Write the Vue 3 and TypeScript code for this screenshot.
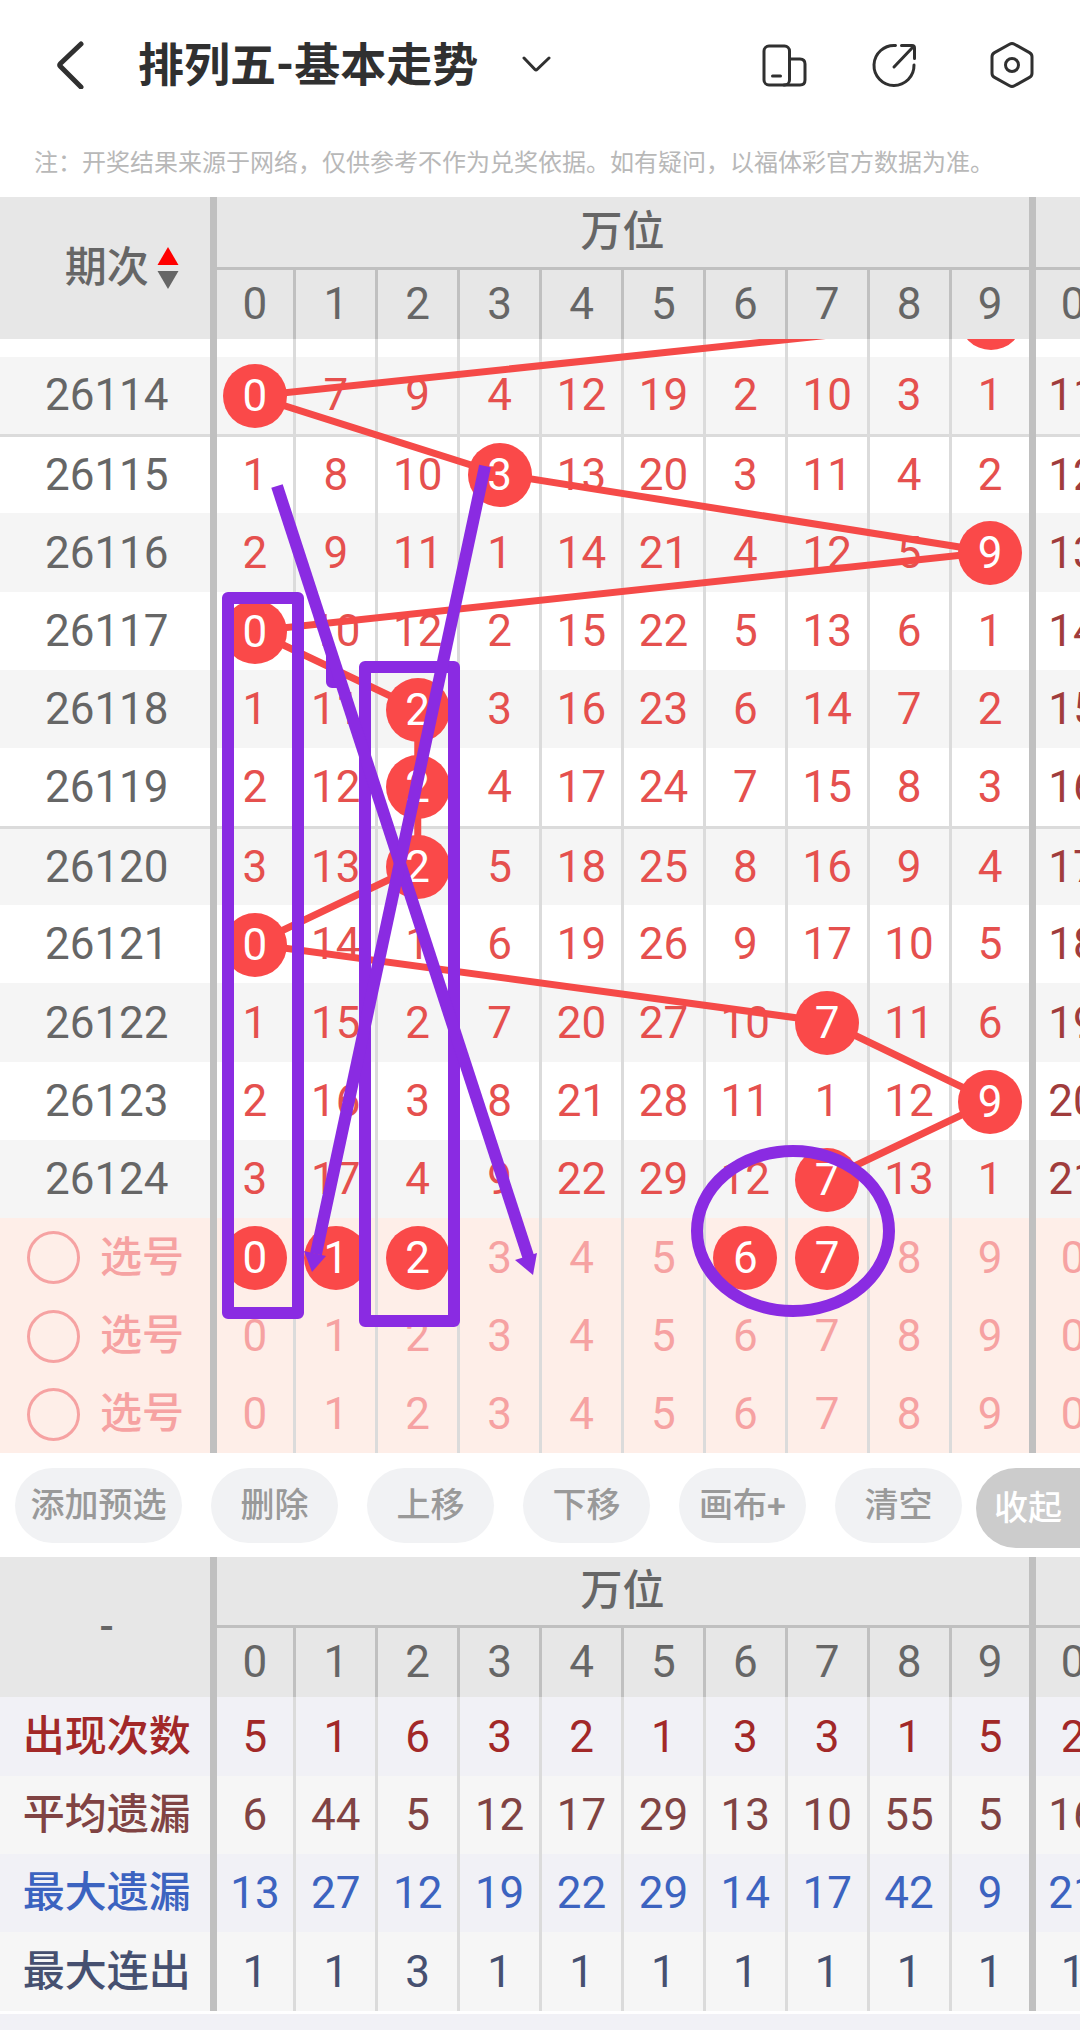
<script setup lang="ts">
import { ref } from 'vue'

interface Draw {
  issue: string
  cells: number[]
  hit: number
  next: number
}

interface Stat {
  label: string
  tone: string
  values: number[]
  next: number
}

const digits = [0, 1, 2, 3, 4, 5, 6, 7, 8, 9]

const draws: Draw[] = [
  { issue: '26114', cells: [0, 7, 9, 4, 12, 19, 2, 10, 3, 1], hit: 0, next: 11 },
  { issue: '26115', cells: [1, 8, 10, 3, 13, 20, 3, 11, 4, 2], hit: 3, next: 12 },
  { issue: '26116', cells: [2, 9, 11, 1, 14, 21, 4, 12, 5, 9], hit: 9, next: 13 },
  { issue: '26117', cells: [0, 10, 12, 2, 15, 22, 5, 13, 6, 1], hit: 0, next: 14 },
  { issue: '26118', cells: [1, 11, 2, 3, 16, 23, 6, 14, 7, 2], hit: 2, next: 15 },
  { issue: '26119', cells: [2, 12, 2, 4, 17, 24, 7, 15, 8, 3], hit: 2, next: 16 },
  { issue: '26120', cells: [3, 13, 2, 5, 18, 25, 8, 16, 9, 4], hit: 2, next: 17 },
  { issue: '26121', cells: [0, 14, 1, 6, 19, 26, 9, 17, 10, 5], hit: 0, next: 18 },
  { issue: '26122', cells: [1, 15, 2, 7, 20, 27, 10, 7, 11, 6], hit: 7, next: 19 },
  { issue: '26123', cells: [2, 16, 3, 8, 21, 28, 11, 1, 12, 9], hit: 9, next: 20 },
  { issue: '26124', cells: [3, 17, 4, 9, 22, 29, 12, 7, 13, 1], hit: 7, next: 21 },
]

const picks = ref<number[][]>([[0, 1, 2, 6, 7], [], []])
const activePick = ref<number | null>(null)

function toggle(row: number, digit: number) {
  const list = picks.value[row]
  const at = list.indexOf(digit)
  if (at < 0) list.push(digit)
  else list.splice(at, 1)
}

const stats: Stat[] = [
  { label: '出现次数', tone: 'count', values: [5, 1, 6, 3, 2, 1, 3, 3, 1, 5], next: 2 },
  { label: '平均遗漏', tone: 'average', values: [6, 44, 5, 12, 17, 29, 13, 10, 55, 5], next: 16 },
  { label: '最大遗漏', tone: 'longest', values: [13, 27, 12, 19, 22, 29, 14, 17, 42, 9], next: 21 },
  { label: '最大连出', tone: 'streak', values: [1, 1, 3, 1, 1, 1, 1, 1, 1, 1], next: 1 },
]

const actions = ['添加预选', '删除', '上移', '下移', '画布+', '清空']

// Trend line geometry: the overlay spans the ten digit columns,
// and every third row is one pixel taller than its neighbours.
const overlayWidth = 819
const overlayHeight = 1114
const columnWidth = overlayWidth / 10
const peek = 18
const rowHeight = 78

const centreX = (digit: number) => (digit + 0.5) * columnWidth
const centreY = (row: number) => peek + row * rowHeight + Math.floor(row / 3) + rowHeight / 2

const previous = { x: centreX(9), y: peek - rowHeight / 2 }
const trend = [
  `${previous.x},${previous.y}`,
  ...draws.map((d, i) => `${centreX(d.hit)},${centreY(i)}`),
].join(' ')
</script>

<template>
  <main class="page">
    <header class="bar">
      <button class="icon back" type="button" aria-label="返回">
        <svg width="28" height="48" viewBox="0 0 28 48"><path d="M25 3 4.500 22.500Q3 24 4.500 25.500L25 46" /></svg>
      </button>
      <h1 class="title">排列五-基本走势</h1>
      <button class="icon more" type="button" aria-label="切换走势">
        <svg width="30" height="18" viewBox="0 0 30 18"><path d="M3 2 14 13.500q1 1 2 0L28 2" /></svg>
      </button>
      <nav class="tools">
        <button class="icon" type="button" aria-label="横竖屏">
          <svg width="48" height="48" viewBox="0 0 48 48">
            <rect x="3" y="5" width="25.500" height="39" rx="5" />
            <path d="M28.500 18H39q5 0 5 5v16q0 5-5 5H23M11.500 35h8" />
          </svg>
        </button>
        <button class="icon" type="button" aria-label="分享">
          <svg width="48" height="48" viewBox="0 0 48 48">
            <path d="M25.500 4.500A20 20 0 1 0 44 24M24 26 43.500 5.500M31.500 4.500H42q2.500 0 2.500 2.500V17.500" />
          </svg>
        </button>
        <button class="icon settings" type="button" aria-label="设置">
          <svg width="48" height="48" viewBox="0 0 48 48">
            <path d="M21.500 3.200q2.500-1.400 5 0l15 8.400q2.500 1.400 2.500 4.200v16.400q0 2.800-2.500 4.200l-15 8.400q-2.500 1.400-5 0l-15-8.400Q4 35 4 32.200V15.800q0-2.800 2.500-4.200Z" />
            <circle cx="24" cy="24" r="6.500" />
          </svg>
        </button>
      </nav>
    </header>
    <p class="note">注：开奖结果来源于网络，仅供参考不作为兑奖依据。如有疑问，以福体彩官方数据为准。</p>

    <section class="chart">
      <table class="grid">
        <colgroup>
          <col class="col-label" />
          <col v-for="d in digits" :key="d" />
          <col class="col-next" />
        </colgroup>
        <thead>
          <tr class="group">
            <th class="label" rowspan="2" scope="col">
              <button class="sort" type="button">
                期次
                <svg width="22" height="44" viewBox="0 0 22 44">
                  <path class="up" d="M11 1 21.500 19H.5Z" />
                  <path class="down" d="M.5 25h21L11 43Z" />
                </svg>
              </button>
            </th>
            <th class="place" colspan="10" scope="colgroup">万位</th>
            <th class="place"></th>
          </tr>
          <tr class="heads">
            <th v-for="d in digits" :key="d" scope="col">{{ d }}</th>
            <th class="next" scope="col"><div>0</div></th>
          </tr>
        </thead>
        <tbody>
          <tr class="peek">
            <th class="label"></th>
            <td v-for="d in digits" :key="d"></td>
            <td class="next"></td>
          </tr>
          <tr v-for="(row, r) in draws" :key="row.issue" class="draw" :class="{ shade: r % 2 === 0, tall: r % 3 === 2, rule: r === 0 || r === 5 }">
            <th class="label" scope="row">{{ row.issue }}</th>
            <td v-for="(n, i) in row.cells" :key="i">
              <span :class="{ ball: i === row.hit }">{{ n }}</span>
            </td>
            <td class="next"><div>{{ row.next }}</div></td>
          </tr>
          <tr v-for="(pick, r) in picks" :key="'pick' + r" class="pick" :class="{ tall: r === 0 }">
            <th class="label" scope="row">
              <label class="choose"><input v-model="activePick" type="radio" name="pick" :value="r" />选号</label>
            </th>
            <td v-for="d in digits" :key="d">
              <button :class="{ ball: pick.includes(d) }" type="button" @click="toggle(r, d)">{{ d }}</button>
            </td>
            <td class="next"><div>0</div></td>
          </tr>
        </tbody>
      </table>
      <svg class="overlay trend" :viewBox="`0 0 ${overlayWidth} ${overlayHeight}`" preserveAspectRatio="none">
        <polyline :points="trend" />
        <circle :cx="previous.x" :cy="previous.y" r="32" />
      </svg>
      <svg class="overlay marks" :viewBox="`0 0 ${overlayWidth} ${overlayHeight}`" preserveAspectRatio="none">
        <rect x="15" y="259" width="70" height="715" />
        <rect x="152" y="328" width="89" height="654" />
        <path d="M119 316v27h6" />
        <path d="M64 147 316 920" />
        <path class="tip" d="m302 921 22-7-4 22Z" />
        <path d="M272 127 103 915" />
        <path class="tip" d="m91 912 22 5-14 16Z" />
        <ellipse cx="580" cy="892" rx="96" ry="80" />
      </svg>
    </section>

    <div class="actions">
      <button v-for="a in actions" :key="a" class="pill" type="button">{{ a }}</button>
      <button class="fold" type="button">收起</button>
    </div>

    <section class="chart summary">
      <table class="grid">
        <colgroup>
          <col class="col-label" />
          <col v-for="d in digits" :key="d" />
          <col class="col-next" />
        </colgroup>
        <thead>
          <tr class="group">
            <th class="label" rowspan="2">-</th>
            <th class="place" colspan="10" scope="colgroup">万位</th>
            <th class="place"></th>
          </tr>
          <tr class="heads">
            <th v-for="d in digits" :key="d" scope="col">{{ d }}</th>
            <th class="next" scope="col"><div>0</div></th>
          </tr>
        </thead>
        <tbody>
          <tr v-for="(s, i) in stats" :key="s.label" class="stat" :class="[s.tone, { tall: i % 3 === 0 }]">
            <th class="label" scope="row">{{ s.label }}</th>
            <td v-for="(n, k) in s.values" :key="k">{{ n }}</td>
            <td class="next"><div>{{ s.next }}</div></td>
          </tr>
        </tbody>
      </table>
    </section>
    <footer class="foot"></footer>
  </main>
</template>

<style>
body {
  margin: 0;
  background: #fff;
}
</style>

<style scoped>
.page {
  display: flex;
  flex-direction: column;
  min-height: 100vh;
  overflow: hidden;
  color: #666;
  font-family: Roboto, "Noto Sans CJK SC", sans-serif;
}

button {
  margin: 0;
  padding: 0;
  border: 0;
  background: none;
  color: inherit;
  font: inherit;
}

.bar {
  display: flex;
  box-sizing: border-box;
  align-items: center;
  height: 128px;
  padding: 2px 44px 0 56px;
  color: #303030;
}

.icon {
  display: flex;
}

.icon svg {
  fill: none;
  stroke: currentColor;
  stroke-width: 3;
  stroke-linecap: round;
  stroke-linejoin: round;
}

.back svg {
  stroke-width: 5;
}

.title {
  margin: 0 43px 0 54px;
  font-size: 46px;
  font-weight: 700;
  line-height: 64px;
}

.tools {
  display: flex;
  gap: 61px;
  margin-left: auto;
}

.settings {
  margin-left: 9px;
}

.note {
  height: 69px;
  margin: 0;
  padding-left: 34px;
  color: #b8b8b8;
  font-size: 24px;
  line-height: 71px;
  white-space: nowrap;
}

.chart {
  position: relative;
  overflow: hidden;
}

.grid {
  width: 100%;
  table-layout: fixed;
  border-collapse: collapse;
  font-size: 44px;
  line-height: 60px;
}

.col-label {
  width: 213px;
}

.col-next {
  width: 48px;
}

th,
td {
  padding: 0;
  border-right: 3px solid #dbdbdb;
  font-weight: 400;
  text-align: center;
  white-space: nowrap;
}

th.label {
  padding-left: 4px;
  border-right: 7px solid #c0c0c0;
}

.group th,
.choose,
.stat .label {
  font-size: 42px;
  font-weight: 500;
}

td.next,
th.next,
th.place + th.place {
  border-right: 0;
  border-left: 7px solid #c0c0c0;
}

.next div {
  width: 75px;
}

thead {
  background: #e7e7e7;
}

thead th {
  border-right-color: #c0c0c0;
}

thead .place {
  border-bottom: 3px solid #c0c0c0;
}

.group,
.heads {
  height: 71px;
}

.summary .group {
  height: 69px;
}

.sort {
  display: inline-flex;
  align-items: center;
  gap: 8px;
  padding-left: 30px;
}

.up {
  fill: #f00;
}

.down {
  fill: #666;
}

.peek {
  height: 18px;
}

.draw,
.pick,
.stat {
  height: 78px;
}

.tall {
  height: 79px;
}

.shade {
  background: #f5f5f5;
}

.rule > * {
  border-bottom: 3px solid #dbdbdb;
}

.draw td {
  color: #e5504e;
}

.draw td.next {
  color: #a03c3c;
}

.pick {
  background: #feeee8;
  color: #f6a2a2;
}

.ball {
  position: relative;
  z-index: 2;
  display: inline-block;
  width: 64px;
  height: 64px;
  border-radius: 50%;
  background: #fa4949;
  color: #fff;
  line-height: 64px;
  vertical-align: middle;
}

.choose {
  display: flex;
  align-items: center;
  gap: 20px;
  padding-left: 23px;
}

.choose input {
  width: 53px;
  height: 53px;
  margin: 0;
  border: 3px solid #f6a2a2;
  border-radius: 50%;
  appearance: none;
}

.choose input:checked {
  background: #f6a2a2;
}

.overlay {
  position: absolute;
  bottom: 0;
  left: 213px;
  width: calc(100% - 261px);
  height: 1114px;
  overflow: hidden;
  pointer-events: none;
}

.trend {
  z-index: 1;
  fill: #fa4949;
}

.trend polyline {
  fill: none;
  stroke: #f54a48;
  stroke-width: 7;
}

.marks {
  z-index: 3;
  fill: none;
  stroke: #8a2be2;
  stroke-width: 12;
  stroke-linejoin: round;
}

.marks .tip {
  fill: #8a2be2;
  stroke: none;
}

.actions {
  display: flex;
  height: 89px;
  padding: 15px 0 0 15px;
  font-size: 34px;
  font-weight: 500;
}

.pill,
.fold {
  padding-bottom: 6px;
  white-space: nowrap;
}

.pill {
  flex: 1 1 127px;
  height: 75px;
  margin-right: 29px;
  border-radius: 38px;
  background: #f1f2f4;
  color: #999;
}

.pill:first-child {
  flex-basis: 167px;
}

.pill:nth-last-child(2) {
  margin-right: 14px;
}

.fold {
  width: 104px;
  height: 80px;
  border-radius: 40px 0 0 40px;
  background: #ccc;
  color: #fff;
}

.stat {
  background: #f6f6f6;
}

.count,
.longest {
  background: #f1f1f6;
}

.count {
  color: #a22828;
}

.average {
  color: #804343;
}

.longest {
  color: #3c63c0;
}

.streak {
  color: #465070;
}

.foot {
  flex: 1;
  min-height: 16px;
  border-top: 3px solid #fff;
  background: #f1f1f6;
}
</style>
